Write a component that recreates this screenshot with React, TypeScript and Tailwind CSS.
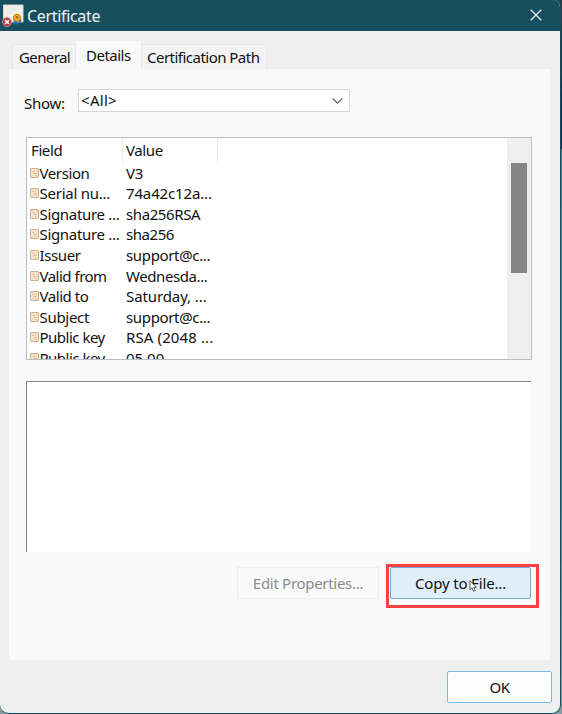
import React from "react";

const rows = [
  { field: "Version", value: "V3", fieldTrack: "tracking-[-0.4px]", valueTrack: "tracking-[-0.25px]" },
  { field: "Serial nu...", value: "74a42c12a...", fieldTrack: "tracking-[-0.25px]", valueTrack: "tracking-[-0.15px]" },
  { field: "Signature ...", value: "sha256RSA", fieldTrack: "tracking-[-0.32px]", valueTrack: "tracking-[-0.4px]" },
  { field: "Signature ...", value: "sha256", fieldTrack: "tracking-[-0.32px]", valueTrack: "tracking-[-0.45px]" },
  { field: "Issuer", value: "support@c...", fieldTrack: "tracking-[-0.4px]", valueTrack: "tracking-[-0.35px]" },
  { field: "Valid from", value: "Wednesda...", fieldTrack: "tracking-[-0.5px]", valueTrack: "tracking-[-0.42px]" },
  { field: "Valid to", value: "Saturday, ...", fieldTrack: "tracking-[-0.45px]", valueTrack: "tracking-[-0.1px]" },
  { field: "Subject", value: "support@c...", fieldTrack: "tracking-[-0.3px]", valueTrack: "tracking-[-0.35px]" },
  { field: "Public key", value: "RSA (2048 ...", fieldTrack: "tracking-[-0.5px]", valueTrack: "tracking-[0.12px]" },
  { field: "Public key", value: "05 00", fieldTrack: "tracking-[-0.5px]", valueTrack: "tracking-[0px]" },
];

function CertificateIcon() {
  return (
    <svg width="23" height="23" viewBox="0 0 23 23" className="shrink-0">
      <path d="M1.5 1h19.5v17H1.5z" fill="#f3f0e9" stroke="#ddd5c5" />
      <path d="M4 4h14M4 6.5h10M4 9h7" stroke="#e3e2dc" />
      <path d="m11.5 15 .2 6 2.3-2 2 2.5v-5l2.5 3.5 1-4-3-3z" fill="#2979c6" />
      <circle cx="15" cy="13.8" r="3.6" fill="#eab528" stroke="#b77a16" />
      <circle cx="15" cy="13.3" r="1.3" fill="#9d6517" />
      <circle cx="5" cy="18" r="4.5" fill="#b9303b" stroke="#dfa2a7" strokeWidth=".8" />
      <path d="m3.1 16.1 3.8 3.8m0-3.8-3.8 3.8" stroke="#fff" strokeWidth="1.5" />
    </svg>
  );
}

function FieldIcon() {
  return (
    <svg width="9" height="10" viewBox="0 0 9 10" className="shrink-0">
      <rect x=".5" y=".5" width="8" height="9" rx=".5" fill="#f8e3cd" stroke="#cfae90" />
      <path d="M2.5 3.5h2M3.5 5.5h3M5 7.5h1.5" stroke="#dbb591" />
      <path d="M6.5 2v2M2.5 7v1" stroke="#ecd2b8" />
    </svg>
  );
}

export default function App() {
  return (
    <div className="h-[714px] w-[562px] overflow-hidden bg-[linear-gradient(to_bottom,#213f46_0,#123849_70px,#062b49_100px,#062b49_148px,#4b8395_150px,#53879a_510px,#849ba2_100%)] font-['Noto_Sans',sans-serif] text-[15px] leading-5 text-[#111]">
      <main className="flex h-[714px] w-[561px] flex-col overflow-hidden rounded-tr-[7px] rounded-b-[9px] border-r border-b border-[#174f60] bg-[#efefef]">
        <header className="flex h-[31px] shrink-0 items-center bg-[#174f5f] pl-[2px] text-[#edf3f4]">
          <CertificateIcon />
          <h1 className="ml-[2px] text-[16px] tracking-[-0.33px]">Certificate</h1>
          <svg width="12" height="12" viewBox="0 0 12 12" className="-mt-[2px] mr-[18px] ml-auto">
            <path d="m.7.7 10.6 10.6m0-10.6L.7 11.3" stroke="#e3edef" strokeWidth="1.25" fill="none" />
          </svg>
        </header>

        <nav className="flex h-[38px] shrink-0 items-end pl-3">
          <div className="flex h-[25px] w-16 items-center border border-b-0 border-[#e8e8e8] bg-[#f3f3f3] pl-[6px] tracking-[-0.6px]">General</div>
          <div className="flex h-[28px] w-[65px] items-center bg-[#f9f9f9] pb-px pl-[10px] tracking-[-0.5px]">Details</div>
          <div className="flex h-[25px] w-[126px] items-center whitespace-nowrap border border-b-0 border-[#e8e8e8] bg-[#f3f3f3] pl-[5px] tracking-[-0.52px]">Certification Path</div>
        </nav>

        <section className="ml-[9px] flex h-[591px] w-[541px] shrink-0 flex-col bg-[#f9f9f9] pt-5 pl-[17px]">
          <div className="flex h-[23px] items-center">
            <span className="mt-[4px] w-[52px] -translate-x-[2px] tracking-[-0.25px]">Show:</span>
            <div className="flex h-[23px] w-[272px] items-center border border-[#d8d8d8] bg-white pl-[2px]">
              <span className="-mt-px tracking-[0.3px]">&lt;All&gt;</span>
              <svg width="11" height="6" viewBox="0 0 11 6" className="mr-[6px] ml-auto">
                <path d="m.7.5 4.8 4.7L10.3.5" fill="none" stroke="#666" strokeWidth="1.2" />
              </svg>
            </div>
          </div>

          <div className="mt-[25px] flex h-[223px] w-[506px] overflow-hidden border border-[#b8c0c5] bg-white">
            <div className="flex w-[480px] flex-col">
              <div className="flex h-[24.5px] shrink-0">
                <div className="w-[96px] border-r border-[#ebebeb] pt-[2px] pl-[4px] tracking-[-0.4px]">Field</div>
                <div className="w-[95px] border-r border-[#ebebeb] pt-[2px] pl-[3px] tracking-[-0.4px]">Value</div>
              </div>
              {rows.map((row, i) => (
                <div className="flex h-[20.55px] shrink-0 items-center whitespace-nowrap pl-[3px]" key={i}>
                  <FieldIcon />
                  <span className={"w-[87px] pl-[0.5px] " + row.fieldTrack}>{row.field}</span>
                  <span className={row.valueTrack}>{row.value}</span>
                </div>
              ))}
            </div>
            <div className="w-6 bg-[#efefef] pt-[25px] pl-1">
              <div className="h-[110px] w-4 bg-[#858585]" />
            </div>
          </div>

          <div className="mt-[21px] h-[171px] w-[505px] shrink-0 border-t border-l border-[#858585] bg-white" />

          <div className="relative mt-[15px] flex h-8">
            <button className="ml-[211px] h-8 w-[142px] border border-[#ededed] bg-[#f9f9f9] pb-px tracking-[-0.3px] text-[#8b8b8b]">Edit Properties...</button>
            <button className="ml-[11px] h-8 w-[141px] rounded-[2px] border border-[#72a9cf] bg-[#e0eef9] pb-px tracking-[-0.15px]">Copy to File...</button>
            <div className="absolute top-[-3px] left-[360px] h-[44px] w-[153px] border-3 border-[#ff3f40]" />
            <svg width="8" height="12" viewBox="0 0 8 12" className="absolute top-[13px] left-[443px]">
              <path d="M1 .8v9l2-2 1.5 3.5 1.7-.8-1.5-3.2h2.7z" fill="#fff" stroke="#333" strokeWidth=".8" />
            </svg>
          </div>
        </section>

        <footer className="flex shrink-0 justify-end pt-[11px] pr-[8px]">
          <button className="h-8 w-[105px] rounded-[2px] border border-[#7ebae0] bg-[#fdfdfd] pb-px tracking-[-0.6px]">OK</button>
        </footer>
      </main>
    </div>
  );
}
